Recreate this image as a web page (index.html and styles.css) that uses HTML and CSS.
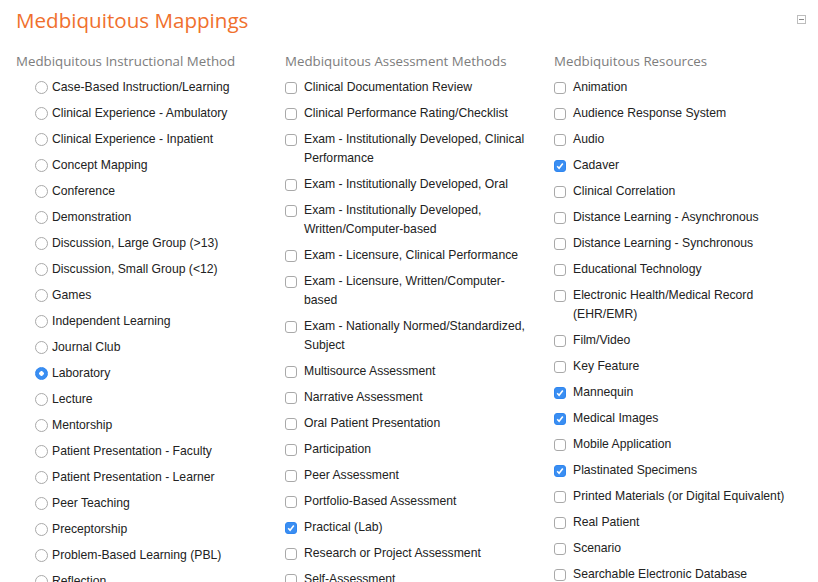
FILE: index.html
```html
<!DOCTYPE html>
<html lang="en">
<head>
    <meta charset="UTF-8">
    <title>Medbiquitous Mappings</title>
    <link rel="stylesheet" href="styles.css">
</head>
<body>
    <div class="panel">
        <div class="panel-head">
            <h1>Medbiquitous Mappings</h1>
            <span class="collapse" title="Collapse"></span>
        </div>

        <div class="columns">
            <!-- Instructional methods: one choice only -->
            <div class="column">
                <h2>Medbiquitous Instructional Method</h2>
                <ul class="options indented">
                    <li><label><input type="radio" name="method"><span>Case-Based Instruction/Learning</span></label></li>
                    <li><label><input type="radio" name="method"><span>Clinical Experience - Ambulatory</span></label></li>
                    <li><label><input type="radio" name="method"><span>Clinical Experience - Inpatient</span></label></li>
                    <li><label><input type="radio" name="method"><span>Concept Mapping</span></label></li>
                    <li><label><input type="radio" name="method"><span>Conference</span></label></li>
                    <li><label><input type="radio" name="method"><span>Demonstration</span></label></li>
                    <li><label><input type="radio" name="method"><span>Discussion, Large Group (&gt;13)</span></label></li>
                    <li><label><input type="radio" name="method"><span>Discussion, Small Group (&lt;12)</span></label></li>
                    <li><label><input type="radio" name="method"><span>Games</span></label></li>
                    <li><label><input type="radio" name="method"><span>Independent Learning</span></label></li>
                    <li><label><input type="radio" name="method"><span>Journal Club</span></label></li>
                    <li><label><input type="radio" name="method" checked><span>Laboratory</span></label></li>
                    <li><label><input type="radio" name="method"><span>Lecture</span></label></li>
                    <li><label><input type="radio" name="method"><span>Mentorship</span></label></li>
                    <li><label><input type="radio" name="method"><span>Patient Presentation - Faculty</span></label></li>
                    <li><label><input type="radio" name="method"><span>Patient Presentation - Learner</span></label></li>
                    <li><label><input type="radio" name="method"><span>Peer Teaching</span></label></li>
                    <li><label><input type="radio" name="method"><span>Preceptorship</span></label></li>
                    <li><label><input type="radio" name="method"><span>Problem-Based Learning (PBL)</span></label></li>
                    <li><label><input type="radio" name="method"><span>Reflection</span></label></li>
                </ul>
            </div>

            <!-- Assessment methods -->
            <div class="column">
                <h2>Medbiquitous Assessment Methods</h2>
                <ul class="options">
                    <li><label><input type="checkbox"><span>Clinical Documentation Review</span></label></li>
                    <li><label><input type="checkbox"><span>Clinical Performance Rating/Checklist</span></label></li>
                    <li><label><input type="checkbox"><span>Exam - Institutionally Developed, Clinical Performance</span></label></li>
                    <li><label><input type="checkbox"><span>Exam - Institutionally Developed, Oral</span></label></li>
                    <li><label><input type="checkbox"><span>Exam - Institutionally Developed, Written/Computer-based</span></label></li>
                    <li><label><input type="checkbox"><span>Exam - Licensure, Clinical Performance</span></label></li>
                    <li><label><input type="checkbox"><span>Exam - Licensure, Written/Computer-based</span></label></li>
                    <li><label><input type="checkbox"><span>Exam - Nationally Normed/Standardized, Subject</span></label></li>
                    <li><label><input type="checkbox"><span>Multisource Assessment</span></label></li>
                    <li><label><input type="checkbox"><span>Narrative Assessment</span></label></li>
                    <li><label><input type="checkbox"><span>Oral Patient Presentation</span></label></li>
                    <li><label><input type="checkbox"><span>Participation</span></label></li>
                    <li><label><input type="checkbox"><span>Peer Assessment</span></label></li>
                    <li><label><input type="checkbox"><span>Portfolio-Based Assessment</span></label></li>
                    <li><label><input type="checkbox" checked><span>Practical (Lab)</span></label></li>
                    <li><label><input type="checkbox"><span>Research or Project Assessment</span></label></li>
                    <li><label><input type="checkbox"><span>Self-Assessment</span></label></li>
                </ul>
            </div>

            <!-- Resources -->
            <div class="column">
                <h2>Medbiquitous Resources</h2>
                <ul class="options">
                    <li><label><input type="checkbox"><span>Animation</span></label></li>
                    <li><label><input type="checkbox"><span>Audience Response System</span></label></li>
                    <li><label><input type="checkbox"><span>Audio</span></label></li>
                    <li><label><input type="checkbox" checked><span>Cadaver</span></label></li>
                    <li><label><input type="checkbox"><span>Clinical Correlation</span></label></li>
                    <li><label><input type="checkbox"><span>Distance Learning - Asynchronous</span></label></li>
                    <li><label><input type="checkbox"><span>Distance Learning - Synchronous</span></label></li>
                    <li><label><input type="checkbox"><span>Educational Technology</span></label></li>
                    <li><label><input type="checkbox"><span>Electronic Health/Medical Record (EHR/EMR)</span></label></li>
                    <li><label><input type="checkbox"><span>Film/Video</span></label></li>
                    <li><label><input type="checkbox"><span>Key Feature</span></label></li>
                    <li><label><input type="checkbox" checked><span>Mannequin</span></label></li>
                    <li><label><input type="checkbox" checked><span>Medical Images</span></label></li>
                    <li><label><input type="checkbox"><span>Mobile Application</span></label></li>
                    <li><label><input type="checkbox" checked><span>Plastinated Specimens</span></label></li>
                    <li><label><input type="checkbox"><span>Printed Materials (or Digital Equivalent)</span></label></li>
                    <li><label><input type="checkbox"><span>Real Patient</span></label></li>
                    <li><label><input type="checkbox"><span>Scenario</span></label></li>
                    <li><label><input type="checkbox"><span>Searchable Electronic Database</span></label></li>
                </ul>
            </div>
        </div>
    </div>
</body>
</html>
```

FILE: styles.css
```css
body {
    margin: 0;
    padding: 0;
    background: #fff;
    font-family: "Liberation Sans", Arial, sans-serif;
    overflow: hidden; /* list runs past the window */
}

.panel {
    padding: 6px 12px 0 16px;
}

.panel-head {
    display: flex;
    justify-content: space-between;
    align-items: flex-start;
}

h1 {
    margin: 0;
    font-family: "Open Sans", "DejaVu Sans", sans-serif;
    font-size: 20.6px;
    font-weight: 400;
    color: #f0702d;
    line-height: 28px;
}

/* small collapse box in the top right corner */
.collapse {
    position: relative;
    width: 7px;
    height: 7px;
    margin-top: 9px;
    border: 1px solid #bdbdbd;
}

.collapse::after {
    content: "";
    position: absolute;
    left: 1px;
    top: 3px;
    width: 5px;
    height: 1px;
    background: #888;
}

.columns {
    display: grid;
    grid-template-columns: 269px 269px 1fr;
    margin-top: 17px;
}

h2 {
    margin: 0 0 7px;
    font-family: "Open Sans", "DejaVu Sans", sans-serif;
    font-size: 13.3px;
    font-weight: 400;
    color: #7d7d7d;
    line-height: 20px;
}

.options {
    list-style: none;
    margin: 0;
    padding: 0 20px 0 0;
}

.options.indented {
    padding-left: 19px;
}

.options li {
    margin-bottom: 7px;
}

.options label {
    display: flex;
    align-items: flex-start;
    font-size: 12.2px;
    line-height: 19px;
    color: #222;
}

.options span {
    flex: 1;
}

.options input {
    appearance: none;
    flex: none;
    margin: 4px 7px 0 0;
    width: 12px;
    height: 12px;
    border: 1px solid #a9a9a9;
    border-radius: 3px;
    background: #fff;
}

.options input[type="radio"] {
    width: 13px;
    height: 13px;
    margin: 3px 4px 0 0;
    border-radius: 50%;
}

.options input:checked {
    border-color: #2f86f0;
    background: #3a8ef2;
}

.options input[type="checkbox"]:checked {
    background: #3a8ef2 url("data:image/svg+xml,%3Csvg xmlns='http://www.w3.org/2000/svg' viewBox='0 0 12 12'%3E%3Cpath d='M3.2 6.2l1.9 2 3.7-4.6' fill='none' stroke='white' stroke-width='1.6'/%3E%3C/svg%3E") center / 12px no-repeat;
}

.options input[type="radio"]:checked {
    background: radial-gradient(circle, #fff 0 2px, #3a8ef2 2.5px);
}
```
